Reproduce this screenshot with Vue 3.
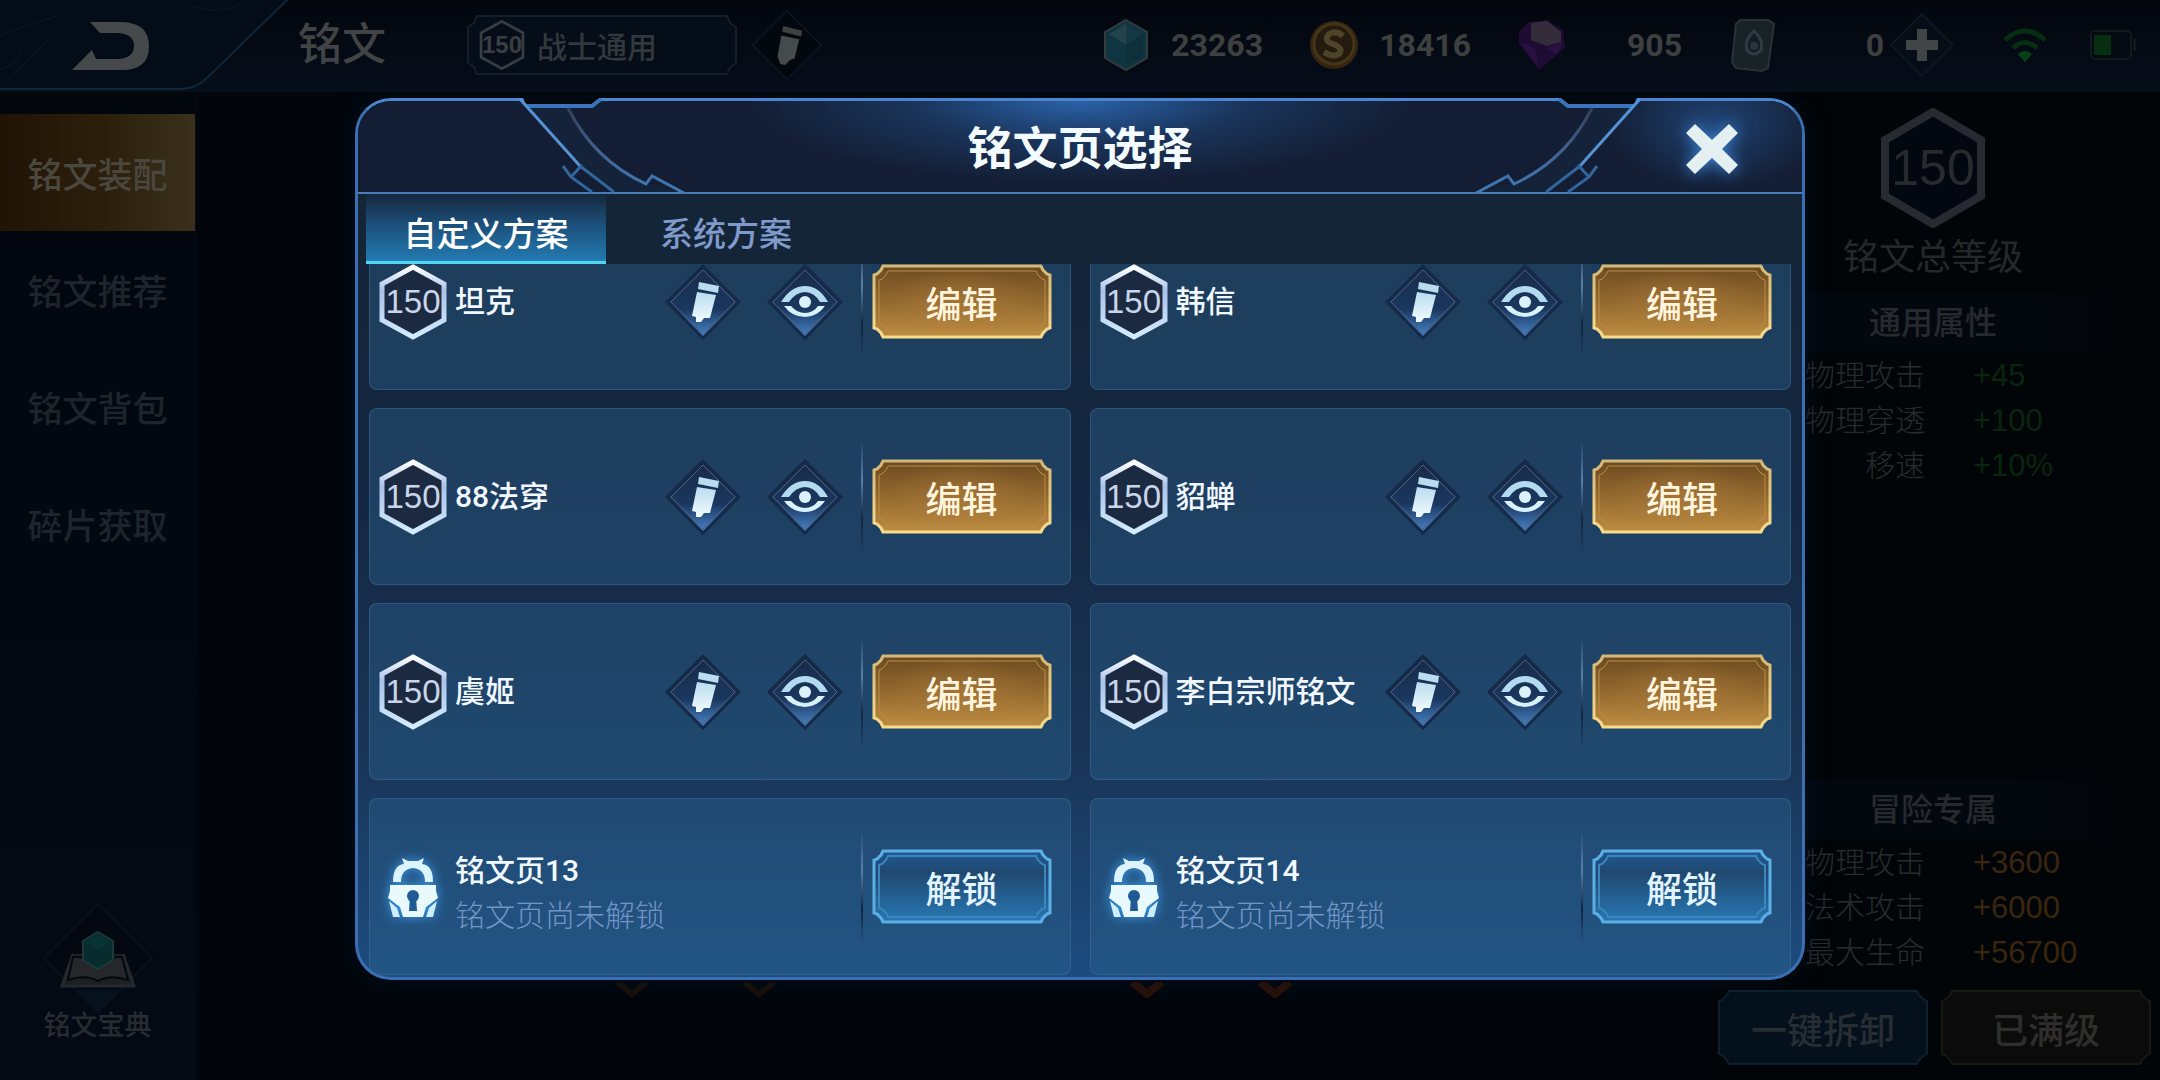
<template>
  <div class="screen">
    <svg class="defs" aria-hidden="true">
      <defs>
        <linearGradient id="goldFill" x1="0" y1="0" x2="0" y2="1">
          <stop offset="0" stop-color="#6b4a20" />
          <stop offset="0.5" stop-color="#94692f" />
          <stop offset="1" stop-color="#bd8c40" />
        </linearGradient>
        <linearGradient id="goldLine" x1="0" y1="0" x2="0" y2="1">
          <stop offset="0" stop-color="#d5b878" />
          <stop offset="1" stop-color="#f7dc8c" />
        </linearGradient>
        <linearGradient id="blueFill" x1="0" y1="0" x2="0" y2="1">
          <stop offset="0" stop-color="#1f5a94" />
          <stop offset="0.3" stop-color="#20486f" />
          <stop offset="1" stop-color="#2878b4" />
        </linearGradient>
        <radialGradient id="goldGlow" cx="0.5" cy="0.5" r="0.5">
          <stop offset="0" stop-color="#b58440" stop-opacity="0.45" />
          <stop offset="1" stop-color="#b58440" stop-opacity="0" />
        </radialGradient>
        <linearGradient id="hexLine" x1="0" y1="0" x2="0" y2="1">
          <stop offset="0" stop-color="#ffffff" />
          <stop offset="0.35" stop-color="#a9c2ea" />
          <stop offset="1" stop-color="#d3ecff" />
        </linearGradient>
        <linearGradient id="diamondFill" x1="0" y1="0" x2="0" y2="1">
          <stop offset="0" stop-color="#182b49" />
          <stop offset="0.6" stop-color="#1a375f" />
          <stop offset="1" stop-color="#4a8ad0" />
        </linearGradient>
        <linearGradient id="iconFill" x1="0" y1="0" x2="0" y2="1">
          <stop offset="0" stop-color="#b9dcef" />
          <stop offset="1" stop-color="#f2fbff" />
        </linearGradient>
        <linearGradient id="arcLine" x1="0" y1="0" x2="0" y2="1">
          <stop offset="0" stop-color="#333d59" />
          <stop offset="0.5" stop-color="#42628f" />
          <stop offset="1" stop-color="#4279b5" />
        </linearGradient>
      </defs>
    </svg>

    <header class="topbar">
      <button class="back" aria-label="返回">
        <svg viewBox="0 0 290 92">
          <path d="M0 0H288L208 78Q196 90 180 90H0Z" fill="#040c18" />
          <path d="M288 0L208 78Q196 90 180 90H0" fill="none" stroke="#10273b" stroke-width="2" />
          <path d="M0 70Q18 66 22 48M0 36L60 16M10 80L48 40M190 6q24 10 50 0" fill="none" stroke="#081320" stroke-width="2" />
          <path d="M90 23H122Q149 24 149 47Q149 71 122 71H72L92 51L96 60H118Q134 59 134 47Q134 35 118 34H100Z" fill="#45494a" />
        </svg>
      </button>
      <h1>铭文</h1>
      <button class="page-name">
        <svg class="page-frame" viewBox="0 0 270 60" preserveAspectRatio="none">
          <path d="M10 1H260L263 8L269 12V48L263 52L260 59H10L7 52L1 48V12L7 8Z" fill="#050d18" stroke="#161e29" stroke-width="2" />
        </svg>
        <span class="hex hex-small">
          <svg viewBox="0 0 68 76"><path d="M34 3L65 20V56L34 73L3 56V20Z" fill="#070d18" stroke="#363d44" stroke-width="4" /></svg>
          <span>150</span>
        </span>
        <span class="page-text">战士通用</span>
      </button>
      <button class="top-edit" aria-label="重命名">
        <svg viewBox="0 0 76 76">
          <path d="M38 2L74 38L38 74L2 38Z" fill="#03070e" stroke="#0b1420" stroke-width="2" />
          <path d="M34 18L54 23L53 29L33 24Z" fill="#3c4142" />
          <path d="M32 28L51 32L46 52L41 54L36 59L31 58L28 50Z" fill="#454a4b" />
        </svg>
      </button>

      <div class="wallet">
        <div class="coin">
          <svg viewBox="0 0 50 54" class="coin-icon">
            <path d="M25 2L46 14V40L25 52L4 40V14Z" fill="#0f3540" stroke="#343b3c" stroke-width="2" />
            <path d="M25 6L42 16L25 27Z" fill="#153944" />
            <path d="M8 16L25 6V27Z" fill="#234249" />
            <path d="M25 27L42 16V38L25 48Z" fill="#0d303a" />
          </svg>
          <span class="amount">23263</span>
        </div>
        <div class="coin">
          <svg viewBox="0 0 50 54" class="coin-icon">
            <circle cx="25" cy="27" r="24" fill="#352410" />
            <circle cx="25" cy="26" r="20" fill="#241b0e" stroke="#443418" stroke-width="3" />
            <path d="M34 18Q27 12 20 16Q14 23 24 26Q35 30 30 36Q24 40 15 34" fill="none" stroke="#4f4428" stroke-width="6" />
          </svg>
          <span class="amount">18416</span>
        </div>
        <div class="coin">
          <svg viewBox="0 0 50 54" class="coin-icon">
            <path d="M12 4L30 2L46 12L48 30L22 52L2 26L2 14Z" fill="#1e0c32" />
            <path d="M14 5L30 3L44 14L44 24L30 28L14 22Z" fill="#352c3b" />
            <path d="M3 24L18 30L22 50ZM30 30L47 24L40 36Z" fill="#2b1042" />
          </svg>
          <span class="amount">905</span>
        </div>
        <div class="coin">
          <svg viewBox="0 0 50 54" class="coin-icon">
            <path d="M12 2H40L46 6L40 50L34 53L8 50L4 44L8 6Z" fill="#192227" stroke="#283237" stroke-width="2" />
            <path d="M26 13Q36 22 33 32Q26 40 19 32Q16 22 26 13Z" fill="#131e26" stroke="#303b41" stroke-width="3" />
            <circle cx="26" cy="28" r="4" fill="#2b363c" />
          </svg>
          <span class="amount">0</span>
        </div>
      </div>

      <button class="add" aria-label="添加">
        <svg viewBox="0 0 68 68">
          <path d="M34 3L65 34L34 65L3 34Z" fill="#060d17" stroke="#0e1621" stroke-width="2" />
          <path d="M29 18H39V29H50V39H39V50H29V39H18V29H29Z" fill="#414546" />
        </svg>
      </button>
      <svg class="wifi" viewBox="0 0 46 36" aria-label="网络">
        <path d="M3 13Q23 -5 43 13M11 21Q23 10 35 21" fill="none" stroke="#052e12" stroke-width="5" />
        <path d="M23 35L16 27Q23 21 30 27Z" fill="#064117" />
      </svg>
      <svg class="battery" viewBox="0 0 46 30" aria-label="电量">
        <rect x="1" y="1" width="40" height="28" rx="4" fill="#040a12" stroke="#111a1b" stroke-width="2" />
        <rect x="4" y="5" width="17" height="20" fill="#062f11" />
        <rect x="43" y="9" width="3" height="12" fill="#111a1b" />
      </svg>
    </header>

    <div class="body">
      <nav class="sidebar">
        <button
          v-for="(item, i) in menu"
          :key="item"
          class="menu-item"
          :class="{ active: i === 0 }"
        >
          {{ item }}
        </button>
        <button class="codex">
          <svg viewBox="0 0 112 112">
            <path d="M56 2L110 56L56 110L2 56Z" fill="#030811" stroke="#0b1119" stroke-width="2" />
            <path d="M34 88H78L56 110Z" fill="#06111f" />
            <path d="M31 52L20 84H92L81 52" fill="#1d1f22" stroke="#23292d" stroke-width="3" />
            <path d="M31 55L26 78Q44 72 56 79Q68 72 86 78L80 55Q66 54 56 62Q46 54 31 55Z" fill="#26272a" stroke="#05090f" stroke-width="2" />
            <path d="M56 30L71 39V58L56 67L41 58V39Z" fill="#082c2d" stroke="#1c3a3a" stroke-width="2" />
            <path d="M56 33L44 40L56 48L69 40Z" fill="#0a3434" />
          </svg>
          <span>铭文宝典</span>
        </button>
      </nav>

      <main class="board">
        <svg class="slots" viewBox="0 0 700 20" aria-hidden="true">
          <path d="M14 0L29 12L44 0M141 0L156 12L171 0" fill="none" stroke="#1a0f08" stroke-width="6" />
          <path d="M529 0L544 12L559 0M657 0L672 12L687 0" fill="none" stroke="#2b1107" stroke-width="8" />
        </svg>
      </main>

      <aside class="stats">
        <div class="hex hex-big">
          <svg viewBox="0 0 104 120"><path d="M52 4L100 32V88L52 116L4 88V32Z" fill="#020710" stroke="#272b31" stroke-width="8" /></svg>
          <span>150</span>
        </div>
        <p class="total">铭文总等级</p>
        <section v-for="group in stats" :key="group.title" :class="group.kind">
          <h2>{{ group.title }}</h2>
          <dl>
            <div v-for="row in group.rows" :key="row[0]">
              <dt>{{ row[0] }}</dt>
              <dd>{{ row[1] }}</dd>
            </div>
          </dl>
        </section>
        <div class="actions">
          <button class="action blue">
            <svg class="frame" viewBox="0 0 210 75" preserveAspectRatio="none">
              <path :d="frame(210, 75, 1, 10)" fill="#04101c" stroke="#0e202d" stroke-width="2" />
            </svg>
            <span>一键拆卸</span>
          </button>
          <button class="action gold">
            <svg class="frame" viewBox="0 0 210 75" preserveAspectRatio="none">
              <path :d="frame(210, 75, 1, 10)" fill="#0b0b0b" stroke="#1a1812" stroke-width="2" />
            </svg>
            <span>已满级</span>
          </button>
        </div>
      </aside>
    </div>

    <div class="overlay">
      <div class="dialog" role="dialog" aria-labelledby="dialog-title">
        <div class="dialog-head">
          <svg
            v-for="side in ['left', 'right']"
            :key="side"
            class="wing"
            :class="side"
            viewBox="0 0 200 96"
          >
            <path d="M23 0H100L94 7H27Z" fill="#03080f" />
            <path d="M26 8H68Q100 70 146 85L182 94H118L80 66Z" fill="#16273c" opacity="0.7" />
            <path d="M27 8H92L101 1" fill="none" stroke="#3a74bd" stroke-width="4" />
            <path d="M20 1L80 68" fill="none" stroke="#5593d6" stroke-width="3" />
            <path d="M80 68L114 94M63 68L71 79L92 94M71 79L82 67" fill="none" stroke="#32659c" stroke-width="3" />
            <path d="M68 10Q94 62 146 86L152 78L184 95" fill="none" stroke="url(#arcLine)" stroke-width="3" />
          </svg>
          <h2 id="dialog-title">铭文页选择</h2>
          <button class="close" aria-label="关闭">
            <svg viewBox="0 0 56 56">
              <path d="M2 12L11 3L28 19L45 3L54 12L38 28L54 44L45 53L28 37L11 53L2 44L18 28Z" fill="#e3eff0" />
            </svg>
          </button>
        </div>

        <div class="tabs" role="tablist">
          <button
            v-for="tab in tabs"
            :key="tab"
            class="tab"
            role="tab"
            :class="{ active: tab === activeTab }"
            :aria-selected="tab === activeTab"
            @click="activeTab = tab"
          >
            {{ tab }}
          </button>
        </div>

        <ul ref="list" class="list">
          <li v-for="page in pages" :key="page.name" class="card">
            <template v-if="!page.locked">
              <span class="hex">
                <svg viewBox="0 0 68 76"><path d="M34 3L65 20V56L34 73L3 56V20Z" fill="#1c2a41" stroke="url(#hexLine)" stroke-width="5" /></svg>
                <span>150</span>
              </span>
              <span class="name">{{ page.name }}</span>
              <button class="icon-btn" aria-label="重命名">
                <svg viewBox="0 0 76 76">
                  <path d="M38 2L74 38L38 74L2 38Z" fill="url(#diamondFill)" stroke="#152a48" stroke-width="3" />
                  <path d="M38 6L70 38L38 70L6 38Z" fill="none" stroke="#4f5e79" stroke-width="1" />
                  <path d="M34 18L54 22L53 29L33 25Z" fill="#b9dcef" />
                  <path d="M32 28L51 31L45 54L39 54L36 58L31 58L31 53L27 52Z" fill="url(#iconFill)" />
                </svg>
              </button>
              <button class="icon-btn" aria-label="查看">
                <svg viewBox="0 0 76 76">
                  <path d="M38 2L74 38L38 74L2 38Z" fill="url(#diamondFill)" stroke="#152a48" stroke-width="3" />
                  <path d="M38 6L70 38L38 70L6 38Z" fill="none" stroke="#4f5e79" stroke-width="1" />
                  <path d="M14 38Q24 22 38 22Q52 22 61 38L53 38Q47 28 38 28Q29 28 22 38Z" fill="#b4daf0" />
                  <path d="M17 42H24Q30 49 38 49Q46 49 51 42H58Q50 53 38 53Q25 53 17 42Z" fill="#d7f1ff" />
                  <circle cx="38" cy="38" r="6" fill="#dcf2fb" />
                </svg>
              </button>
            </template>
            <template v-else>
              <svg class="lock" viewBox="0 0 68 76">
                <path d="M14 33Q14 16 25 15L23 9L29 12H39L45 9L43 15Q54 16 54 33H46Q46 20 34 19Q22 20 22 33Z" fill="#dcf4ff" />
                <path d="M11 36H57V42L59 49L47 58L44 68H24L21 58L9 49L11 42Z" fill="#e9faff" />
                <path d="M10 52L18 59L21 68H14ZM58 52L50 59L47 68H54Z" fill="#cdeeff" />
                <circle cx="34" cy="47" r="6" fill="#1f5a94" />
                <path d="M31 48H37L38 62H30Z" fill="#1f5a94" />
              </svg>
              <span class="name locked">
                {{ page.name }}
                <small>铭文页尚未解锁</small>
              </span>
            </template>
            <span class="rule" />
            <button class="main-btn" :class="page.locked ? 'unlock' : 'edit'">
              <svg class="frame" viewBox="0 0 180 75" preserveAspectRatio="none">
                <template v-if="page.locked">
                  <path :d="frame(180, 75, 2, 9)" fill="url(#blueFill)" stroke="#5cb0e6" stroke-width="3" />
                  <path :d="frame(180, 75, 7, 9)" fill="none" stroke="#3c86be" stroke-width="2" />
                </template>
                <template v-else>
                  <path :d="frame(180, 75, 2, 9)" fill="url(#goldFill)" />
                  <ellipse cx="90" cy="36" rx="70" ry="34" fill="url(#goldGlow)" />
                  <path :d="frame(180, 75, 2, 9)" fill="none" stroke="url(#goldLine)" stroke-width="3" />
                  <path :d="frame(180, 75, 7, 9)" fill="none" stroke="#b98d4b" stroke-width="1" />
                </template>
              </svg>
              <span>{{ page.locked ? "解锁" : "编辑" }}</span>
            </button>
          </li>
        </ul>
      </div>
    </div>
  </div>
</template>

<script setup>
import { onMounted, ref } from "vue";

const menu = ["铭文装配", "铭文推荐", "铭文背包", "碎片获取"];
const tabs = ["自定义方案", "系统方案"];
const activeTab = ref(tabs[0]);
const list = ref(null);

const pages = [
  { name: "坦克" },
  { name: "韩信" },
  { name: "88法穿" },
  { name: "貂蝉" },
  { name: "虞姬" },
  { name: "李白宗师铭文" },
  { name: "铭文页13", locked: true },
  { name: "铭文页14", locked: true },
];

const stats = [
  {
    title: "通用属性",
    kind: "common",
    rows: [
      ["物理攻击", "+45"],
      ["物理穿透", "+100"],
      ["移速", "+10%"],
    ],
  },
  {
    title: "冒险专属",
    kind: "adventure",
    rows: [
      ["物理攻击", "+3600"],
      ["法术攻击", "+6000"],
      ["最大生命", "+56700"],
    ],
  },
];

// outline of a plate with notched corners
const frame = (w, h, p, n) => {
  const r = w - p;
  const b = h - p;
  return [
    `M${p + n} ${p}H${r - n}L${r - n + 2} ${p + 4}L${r - 3} ${p + n - 1}L${r} ${p + n}`,
    `V${b - n}L${r - 3} ${b - n + 1}L${r - n + 2} ${b - 4}L${r - n} ${b}`,
    `H${p + n}L${p + n - 2} ${b - 4}L${p + 3} ${b - n + 1}L${p} ${b - n}`,
    `V${p + n}L${p + 3} ${p + n - 1}L${p + n - 2} ${p + 4}Z`,
  ].join("");
};

onMounted(() => {
  list.value.scrollTop = list.value.scrollHeight;
});
</script>

<style>
body {
  background: #02060c;
}
</style>

<style scoped>
.screen {
  position: relative;
  display: flex;
  flex-direction: column;
  min-height: 100vh;
  overflow: hidden;
  background: #02060c;
  color: #3e4246;
  font-family: Roboto, "Noto Sans CJK SC", sans-serif;
}

.defs {
  position: absolute;
  width: 0;
  height: 0;
}

button {
  padding: 0;
  border: 0;
  background: none;
  color: inherit;
  font: inherit;
  cursor: pointer;
}

svg {
  display: block;
}

h1,
h2,
p,
dl,
dd,
ul {
  margin: 0;
  padding: 0;
}

/* top bar */
.topbar {
  display: flex;
  align-items: center;
  height: 92px;
  box-sizing: border-box;
  border-bottom: 2px solid #06101b;
  background: linear-gradient(#03060d, #060e1a);
}

.back svg {
  width: 290px;
  height: 92px;
}

h1 {
  margin-left: 8px;
  font-size: 44px;
  font-weight: 500;
  line-height: 60px;
  color: #414345;
}

.page-name {
  position: relative;
  display: flex;
  align-items: center;
  width: 270px;
  height: 60px;
  margin-left: 81px;
  padding-left: 12px;
  gap: 12px;
}

.page-frame,
.frame {
  position: absolute;
  inset: 0;
  width: 100%;
  height: 100%;
}

.page-text {
  position: relative;
  font-size: 30px;
  font-weight: 500;
  color: #33383d;
}

.top-edit {
  margin-left: 14px;
}

.top-edit svg {
  width: 72px;
  height: 72px;
}

.wallet {
  display: flex;
  flex: 1;
  justify-content: flex-end;
  gap: 46px;
}

.coin {
  display: flex;
  align-items: center;
  justify-content: space-between;
  width: 162px;
}

.coin:nth-child(n + 3) {
  width: 165px;
}

.coin:nth-child(4) {
  width: 156px;
}

.coin-icon {
  width: 50px;
  height: 54px;
}

.amount {
  font-size: 32px;
  font-weight: 700;
  color: #3e4040;
}

.add {
  margin-left: 4px;
}

.add svg {
  width: 68px;
  height: 68px;
}

.wifi {
  width: 46px;
  height: 36px;
  margin-left: 46px;
}

.battery {
  width: 46px;
  height: 30px;
  margin: 0 24px 0 42px;
}

/* columns under the bar */
.body {
  display: grid;
  grid-template-columns: 196px 1fr 450px;
  flex: 1;
}

.sidebar {
  display: flex;
  flex-direction: column;
  padding-top: 22px;
  background: linear-gradient(#02070e, #030a14);
  border-right: 1px solid #050c15;
}

.menu-item {
  height: 117px;
  font-size: 35px;
  font-weight: 500;
  color: #1e242b;
  white-space: nowrap;
}

.menu-item.active {
  background: linear-gradient(90deg, #211305, #2c200c 55%, #3a301b);
  color: #4a473f;
}

.codex {
  display: flex;
  flex-direction: column;
  align-items: center;
  margin-top: auto;
  padding-bottom: 34px;
  font-size: 27px;
  line-height: 40px;
  font-weight: 500;
  color: #282c31;
}

.codex svg {
  width: 112px;
  height: 112px;
  margin-bottom: -8px;
}

.board {
  display: flex;
  align-items: flex-end;
  justify-content: center;
}

.slots {
  width: 700px;
  height: 20px;
  margin-bottom: 78px;
}

.stats {
  display: flex;
  flex-direction: column;
  padding: 16px 4px 15px 0;
  background: #010507;
}

.hex {
  position: relative;
  display: grid;
  flex: none;
  place-items: center;
  width: 68px;
  height: 76px;
  font-family: "Liberation Sans", sans-serif;
  font-size: 33px;
  color: #c9d5ea;
}

.hex > * {
  grid-area: 1 / 1;
}

.hex > span {
  position: relative;
}

.hex svg {
  width: 100%;
  height: 100%;
}

.hex-small {
  width: 46px;
  height: 52px;
  font-size: 24px;
  font-weight: 700;
  color: #3a3e42;
}

.hex-big {
  align-self: center;
  width: 104px;
  height: 120px;
  font-size: 50px;
  color: #282b2e;
}

.total {
  margin-top: 4px;
  text-align: center;
  font-size: 36px;
  line-height: 52px;
  color: #25282b;
}

.stats h2 {
  background: linear-gradient(90deg, #03080f, #03080f 60%, #010507);
  text-align: center;
  font-size: 32px;
  font-weight: 500;
  line-height: 60px;
  color: #26292e;
}

.common {
  margin-top: 9px;
}

.adventure {
  margin-top: auto;
}

.stats dl div {
  display: grid;
  grid-template-columns: 215px 1fr;
  gap: 48px;
  font-size: 30px;
  line-height: 45px;
}

dt {
  text-align: right;
  font-weight: 300;
  color: #282b2e;
}

dd {
  font-family: "Liberation Sans", sans-serif;
  font-size: 31px;
  color: #09240f;
}

.adventure dd {
  color: #3a260e;
}

.actions {
  display: flex;
  justify-content: flex-end;
  gap: 13px;
  margin-top: 15px;
  padding-right: 5px;
}

.action,
.main-btn {
  position: relative;
  height: 75px;
  font-size: 36px;
  font-weight: 500;
}

.action {
  width: 210px;
  color: #262d33;
}

.action.gold {
  color: #2e2e2c;
}

.action span,
.main-btn span {
  position: relative;
}

/* dialog */
.overlay {
  position: absolute;
  inset: 0;
  display: grid;
  place-items: center;
  padding-bottom: 2px;
}

.dialog {
  position: relative;
  box-sizing: border-box;
  width: 90%;
  max-width: 1450px;
  border: 3px solid #3b6fb4;
  border-top-color: #4a85cf;
  border-radius: 36px;
  background: linear-gradient(#14203a, #14253b 22%, #152742 45%, #193557 75%, #1d4c80);
  box-shadow: 0 0 24px rgba(8, 24, 48, 0.5);
}

.dialog-head {
  position: relative;
  display: grid;
  place-items: center;
  height: 93px;
  box-sizing: border-box;
  padding-top: 6px;
  border-bottom: 2px solid #4a7db8;
  border-radius: 33px 33px 0 0;
  background:
    radial-gradient(ellipse 340px 84px at 50% 0, #2a62a8, rgba(34, 78, 136, 0.45) 50%, transparent),
    radial-gradient(ellipse 110px 70px at 94% 24%, #1f4272, transparent),
    #131d33;
}

.wing {
  position: absolute;
  top: -3px;
  left: 142px;
  width: 200px;
  height: 96px;
}

.wing.right {
  right: 142px;
  left: auto;
  transform: scaleX(-1);
}

.dialog-head h2 {
  font-size: 45px;
  font-weight: 700;
  line-height: 60px;
  color: #f4fbff;
}

.close {
  position: absolute;
  top: 20px;
  right: 62px;
  filter: drop-shadow(0 0 8px #3f86d8);
}

.close svg {
  width: 56px;
  height: 56px;
}

.tabs {
  display: flex;
  height: 70px;
  padding: 0 8px;
  background: #152538;
}

.tab {
  width: 240px;
  padding-top: 8px;
  border-bottom: 3px solid transparent;
  font-size: 33px;
  font-weight: 500;
  color: #7f9acb;
}

.tab.active {
  border-bottom-color: #4fd6f3;
  background: linear-gradient(#16273c, #1c4f7a 45%, #237bb2);
  color: #fff;
}

.list {
  display: grid;
  grid-template-columns: 1fr 1fr;
  gap: 18px 19px;
  align-content: start;
  box-sizing: border-box;
  height: 66vh;
  padding: 0 11px 2px;
  overflow-y: auto;
  border-radius: 0 0 33px 33px;
  list-style: none;
  scrollbar-width: none;
}

.card {
  display: flex;
  align-items: center;
  height: 177px;
  box-sizing: border-box;
  padding: 0 18px 0 9px;
  border: 1px solid rgba(70, 120, 165, 0.4);
  border-radius: 8px;
  background: rgba(44, 98, 140, 0.42);
}

.name {
  flex: 1;
  margin-left: 8px;
  font-size: 30px;
  font-weight: 500;
  line-height: 45px;
  color: #f1f8ff;
}

.name.locked {
  padding-top: 12px;
}

.name small {
  display: block;
  font-size: 30px;
  font-weight: 300;
  color: #7195c6;
}

.icon-btn {
  margin-right: 26px;
}

.icon-btn svg {
  width: 76px;
  height: 76px;
}

.lock {
  width: 68px;
  height: 76px;
  filter: drop-shadow(0 0 6px #3fa0f0);
}

.rule {
  width: 2px;
  height: 112px;
  margin: 0 9px 0 -8px;
  background: linear-gradient(transparent, #5b80a8 35%, #10243f 70%, transparent);
}

.main-btn {
  width: 180px;
}

.edit {
  color: #fff4dd;
}

.unlock {
  color: #e2f5ff;
}
</style>
